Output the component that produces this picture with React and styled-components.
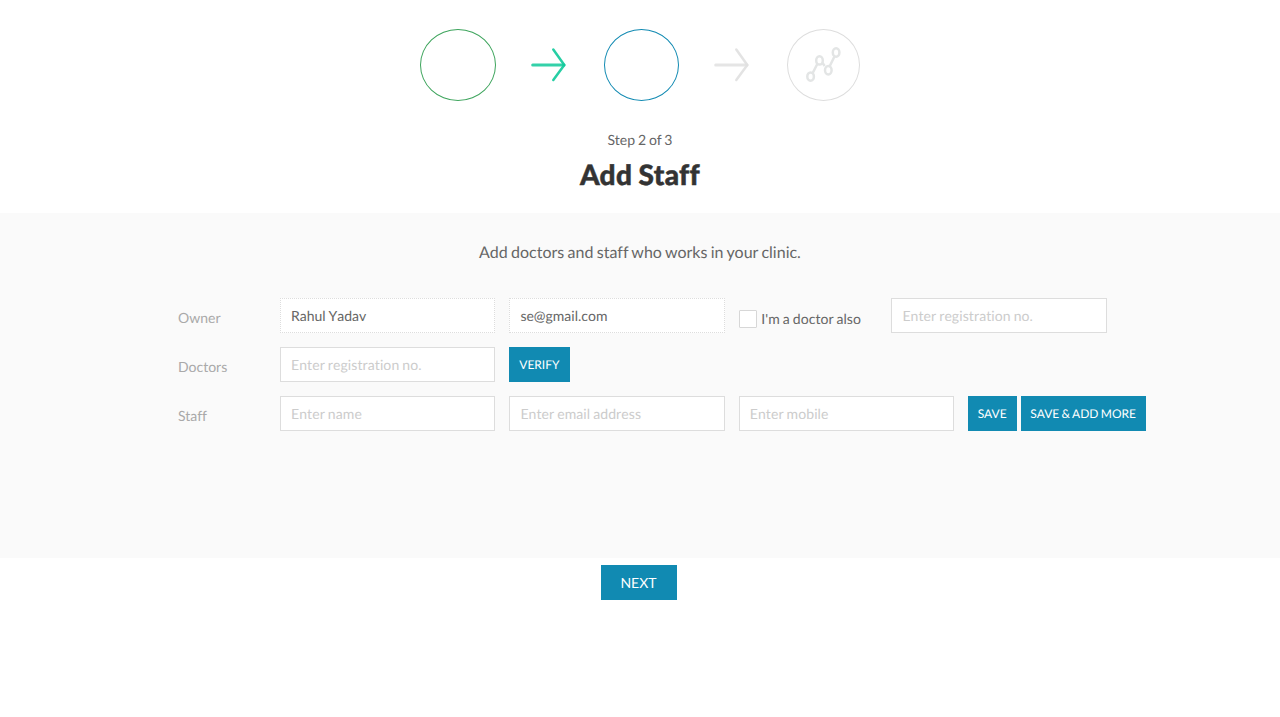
import React from "react";
import styled, { createGlobalStyle } from "styled-components";

const GlobalStyle = createGlobalStyle`
  *, *::before, *::after { box-sizing: border-box; }
  body {
    margin: 0;
    background: #fff;
    color: #666;
    font: 14px/20px Lato, sans-serif;
    font-variant-ligatures: none;
    text-rendering: geometricPrecision;
    word-spacing: -0.7px;
  }
  input, button {
    font-family: inherit;
    font-variant-ligatures: none;
    text-rendering: geometricPrecision;
    margin: 0;
  }
`;

const Page = styled.div`
  min-height: 717px;
`;

const Header = styled.header`
  height: 213px;
  padding-top: 29px;
  display: flex;
  flex-direction: column;
  align-items: center;
`;

const Steps = styled.div`
  width: 440px;
  height: 72px;
  display: flex;
  align-items: center;
`;

const StepCircle = styled.div`
  width: ${(p) => p.$width}px;
  height: 72px;
  flex: none;
  border: 1px solid ${(p) => p.$color};
  border-radius: 50%;
  display: flex;
  align-items: center;
  justify-content: center;
`;

const ArrowIcon = styled.svg`
  width: 36px;
  height: 36px;
  flex: none;
  margin: 0 ${(p) => p.$after}px 0 ${(p) => p.$before}px;
  fill: none;
  stroke: ${(p) => p.$color};
  stroke-linecap: round;
  stroke-linejoin: round;
`;

const GraphIcon = styled.svg`
  width: 36px;
  height: 36px;
  fill: none;
  stroke: #e3e5e5;
  stroke-width: 2.5;
`;

const StepCount = styled.div`
  margin-top: 29px;
`;

const Title = styled.h1`
  margin: 4px 0 0;
  font-size: 28px;
  line-height: 40px;
  font-weight: 900;
  letter-spacing: 0.35px;
  -webkit-text-stroke: 0.5px #333;
  color: #333;
`;

const Panel = styled.main`
  height: 345px;
  padding: 30px 0 0 178px;
  background: #fafafa;
`;

const Intro = styled.p`
  margin: 0 0 35px -178px;
  font-size: 16px;
  line-height: 20px;
  text-align: center;
`;

const Row = styled.div`
  height: 35px;
  margin-bottom: 14px;
  display: flex;
`;

const Label = styled.label`
  width: 102px;
  flex: none;
  padding-top: 10px;
  color: #a9a9a9;
`;

const Field = styled.input`
  width: 215.4px;
  height: 35px;
  flex: none;
  margin-right: 14px;
  padding: 0 10px;
  border: 1px ${(p) => (p.readOnly ? "dotted" : "solid")} #ddd;
  border-radius: 0;
  background: #fff;
  color: #666;
  font-size: 14px;
  font-kerning: none;
  word-spacing: -0.7px;
  outline: none;
  &::placeholder { color: #ccc; opacity: 1; letter-spacing: 0.09px; }
`;

const CheckLabel = styled.label`
  width: 152.6px;
  padding-top: 11px;
  display: flex;
  gap: 4.5px;
  letter-spacing: 0.08px;
`;

const CheckBox = styled.input.attrs({ type: "checkbox" })`
  appearance: none;
  width: 18px;
  height: 18px;
  margin-top: 1px;
  border: 1px solid #d7d7d7;
  border-radius: 1px;
  background: #fff;
`;

const Button = styled.button`
  width: ${(p) => p.$width}px;
  height: 35px;
  flex: none;
  margin-right: 4px;
  padding: 0 1px 0 0;
  border: 0;
  background: #118ab2;
  color: #fff;
  font-size: ${(p) => p.$size || 12}px;
  word-spacing: -0.7px;
  white-space: nowrap;
`;

const Footer = styled.footer`
  padding: 7px 0 0 601px;
`;

const Arrow = (props) => (
  <ArrowIcon viewBox="0 0 36 36" {...props}>
    <path d="M1.7 18H33" strokeWidth="3" strokeOpacity="0.85" />
    <path d="M22.3 2.5L33.3 18L22.3 33" strokeWidth="2.5" strokeOpacity="0.9" />
  </ArrowIcon>
);

export default function App() {
  return (
    <Page>
      <GlobalStyle />
      <Header>
        <Steps>
          <StepCircle $width={76} $color="#3da45c" />
          <Arrow $color="#10c99a" $before={35} $after={37} />
          <StepCircle $width={75} $color="#118ab2" />
          <Arrow $color="#e0e0e0" $before={35} $after={37} />
          <StepCircle $width={73} $color="#ddd">
            <GraphIcon viewBox="0 0 36 36">
              <path d="M6.7 26L11.3 17M16.2 15.5L18.7 19M23.3 20L28.7 9" />
              <ellipse cx="4.6" cy="29.6" rx="3.3" ry="4.2" />
              <ellipse cx="13.5" cy="13.4" rx="3.3" ry="4.2" />
              <ellipse cx="22.3" cy="23.3" rx="3.3" ry="4.2" />
              <ellipse cx="30.1" cy="5.5" rx="3.3" ry="4.2" />
            </GraphIcon>
          </StepCircle>
        </Steps>
        <StepCount>Step 2 of 3</StepCount>
        <Title>Add Staff</Title>
      </Header>
      <Panel>
        <Intro>Add doctors and staff who works in your clinic.</Intro>
        <Row>
          <Label>Owner</Label>
          <Field readOnly value="Rahul Yadav" />
          <Field readOnly value="se@gmail.com" />
          <CheckLabel>
            <CheckBox />
            I'm a doctor also
          </CheckLabel>
          <Field placeholder="Enter registration no." />
        </Row>
        <Row>
          <Label>Doctors</Label>
          <Field placeholder="Enter registration no." />
          <Button $width={61}>VERIFY</Button>
        </Row>
        <Row>
          <Label>Staff</Label>
          <Field placeholder="Enter name" />
          <Field placeholder="Enter email address" />
          <Field placeholder="Enter mobile" />
          <Button $width={49}>SAVE</Button>
          <Button $width={125}>SAVE &amp; ADD MORE</Button>
        </Row>
      </Panel>
      <Footer>
        <Button $width={76} $size={14}>NEXT</Button>
      </Footer>
    </Page>
  );
}
